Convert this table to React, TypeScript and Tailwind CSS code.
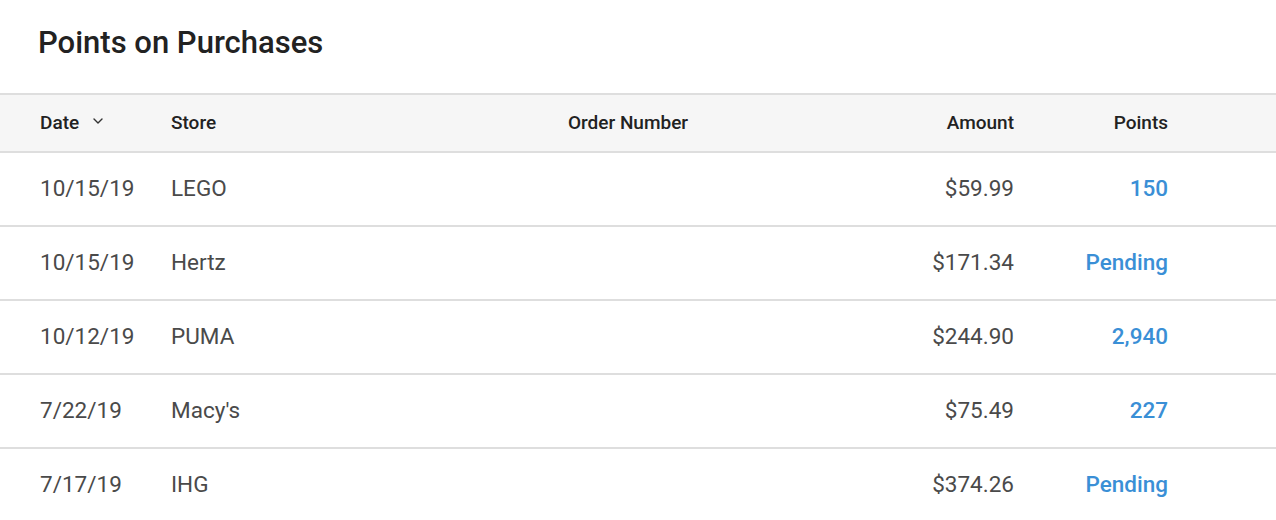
import React from "react";

type Purchase = {
  date: string;
  store: string;
  order: string;
  amount: string;
  points: string;
};

const purchases: Purchase[] = [
  { date: "10/15/19", store: "LEGO", order: "", amount: "$59.99", points: "150" },
  { date: "10/15/19", store: "Hertz", order: "", amount: "$171.34", points: "Pending" },
  { date: "10/12/19", store: "PUMA", order: "", amount: "$244.90", points: "2,940" },
  { date: "7/22/19", store: "Macy's", order: "", amount: "$75.49", points: "227" },
  { date: "7/17/19", store: "IHG", order: "", amount: "$374.26", points: "Pending" },
];

const cols = "grid grid-cols-[131px_309px_296px_238px_154px] items-center pl-[40px]";

const ChevronDown = () => (
  <svg width="10" height="6" viewBox="0 0 10 6" fill="none" className="ml-[14px] mt-[-4px]">
    <path d="M1 1l4 4 4-4" stroke="#333" strokeWidth="1.4" strokeLinecap="round" strokeLinejoin="round" />
  </svg>
);

export default function App() {
  return (
    <div className="w-[1276px] h-[520px] overflow-hidden bg-white font-['Roboto',sans-serif]">
      <h1 className="pl-[38px] pt-[24px] h-[93px] text-[31px] font-medium text-[#222] leading-[38px]">
        Points on Purchases
      </h1>

      <div className={`${cols} h-[60px] bg-[#f6f6f6] border-y-2 border-[#dedede] text-[19px] font-medium text-[#222]`}>
        <div className="flex items-center">
          Date
          <ChevronDown />
        </div>
        <div>Store</div>
        <div className="text-center">Order Number</div>
        <div className="text-right">Amount</div>
        <div className="text-right">Points</div>
      </div>

      {purchases.map((p, i) => (
        <div
          key={i}
          className={`${cols} h-[74px] border-b-2 border-[#dedede] text-[22.5px] text-[#4a4a4a]`}
        >
          <div>{p.date}</div>
          <div>{p.store}</div>
          <div className="text-center">{p.order}</div>
          <div className="text-right">{p.amount}</div>
          <div className="text-right font-medium text-[#3a8fd6]">{p.points}</div>
        </div>
      ))}
    </div>
  );
}
